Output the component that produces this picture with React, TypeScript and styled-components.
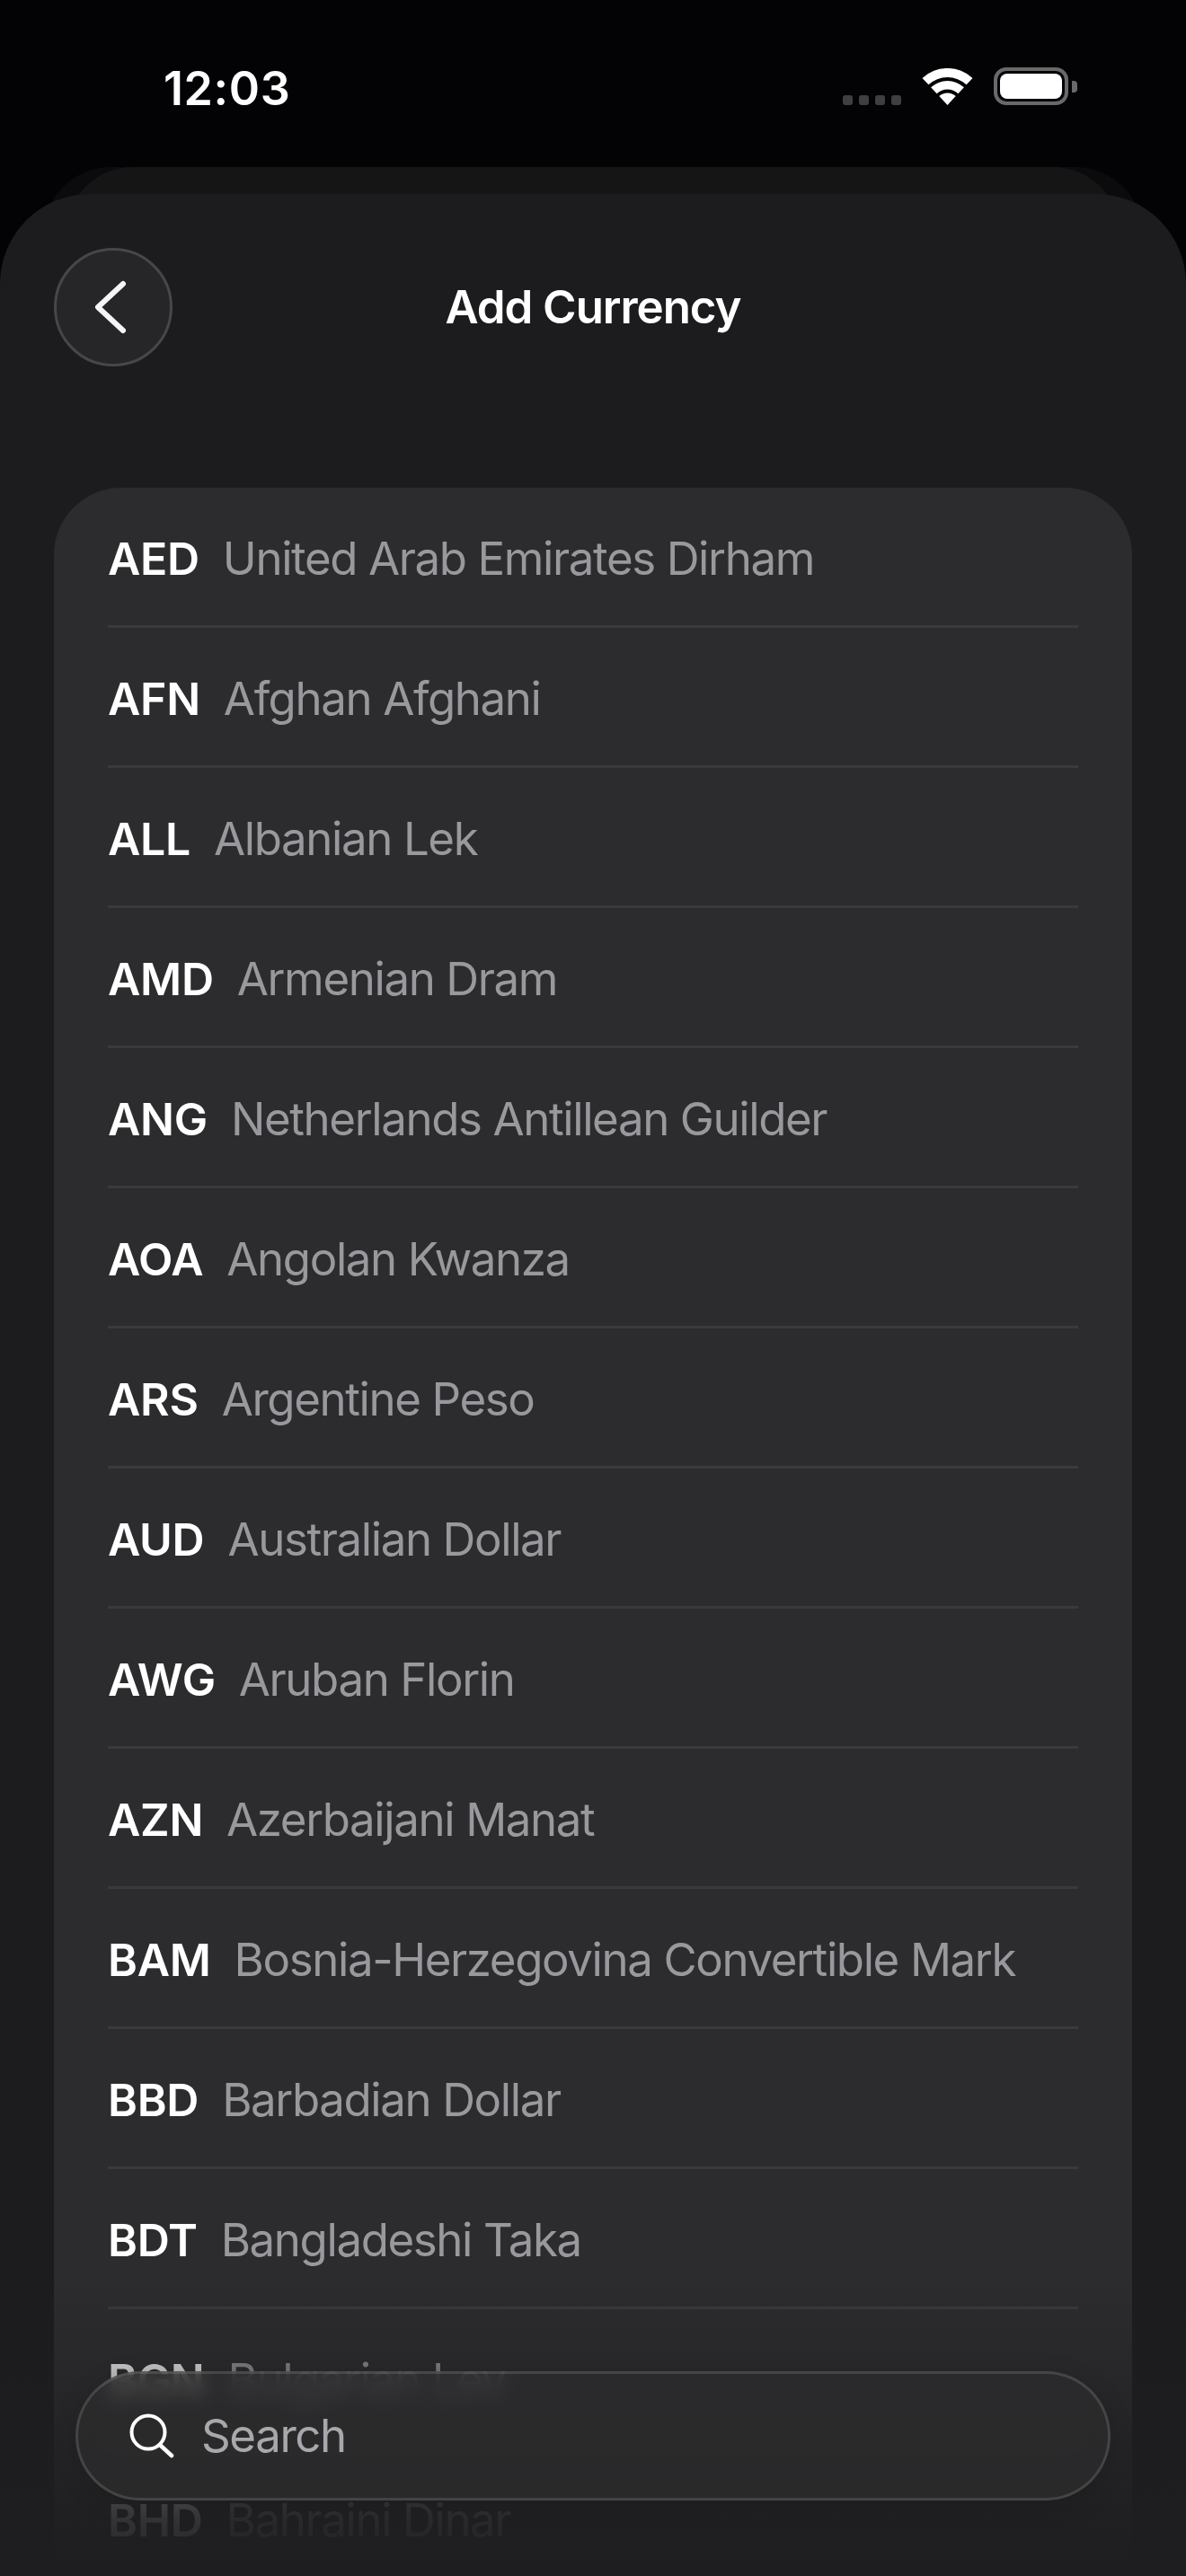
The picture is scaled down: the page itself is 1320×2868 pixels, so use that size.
import React from "react";
import styled, { createGlobalStyle } from "styled-components";

const Global = createGlobalStyle`
  html, body { margin: 0; padding: 0; background: #030305; }
  * { box-sizing: border-box; }
  body { font-family: Inter, "Liberation Sans", sans-serif; -webkit-font-smoothing: antialiased; }
`;

const Screen = styled.div`
  position: relative;
  isolation: isolate;
  width: 1320px;
  height: 2868px;
  overflow: hidden;
  background: #030305;
  color: #fff;
`;

const StatusBar = styled.header`
  height: 216px;
  padding: 71px 131px 0 182px;
  display: flex;
  justify-content: space-between;
  align-items: flex-start;
`;

const Time = styled.span`
  font-size: 52px;
  line-height: 56px;
  font-weight: 600;
  letter-spacing: 0.6px;
`;

const StatusIcons = styled.div`
  display: flex;
  align-items: flex-end;
  height: 42px;
  margin-top: 4px;
`;

const Dots = styled.div`
  display: flex;
  gap: 7px;
  margin-right: 23px;
`;

const Dot = styled.i`
  display: block;
  width: 11px;
  height: 11px;
  border-radius: 3px;
  background: #3f3f41;
`;

const Wifi = styled.svg`
  display: block;
  width: 57px;
  height: 41px;
  margin-right: 23px;
`;

const Battery = styled.div`
  width: 83px;
  height: 42px;
  padding: 3px;
  border: 4px solid #69696b;
  border-radius: 14px;
  position: relative;
  &::after {
    content: "";
    position: absolute;
    left: 83px;
    top: 11px;
    width: 6px;
    height: 13px;
    border-radius: 0 4px 4px 0;
    background: #69696b;
  }
`;

const BatteryFill = styled.div`
  height: 100%;
  border-radius: 8px;
  background: #fff;
`;

const Sheet = styled.main`
  position: relative;
  min-height: 2652px;
  padding: 60px 60px 0;
  background: #1c1c1e;
  border-radius: 100px 100px 0 0;
  &::before,
  &::after {
    content: "";
    position: absolute;
    top: -30px;
    height: 120px;
    border-radius: 75px 75px 0 0;
  }
  &::before {
    left: 48px;
    right: 48px;
    background: #0b0b0e;
    z-index: -2;
  }
  &::after {
    left: 73px;
    right: 73px;
    background: #151516;
    z-index: -1;
  }
`;

const Header = styled.div`
  display: grid;
  grid-template-columns: 132px 1fr 132px;
  align-items: center;
  margin-bottom: 135px;
`;

const BackButton = styled.button`
  width: 132px;
  height: 132px;
  padding: 0 8px 0 0;
  display: flex;
  align-items: center;
  justify-content: center;
  border-radius: 50%;
  border: 3px solid #47474a;
  background: #262628;
`;

const Title = styled.h1`
  margin: 0;
  text-align: center;
  font-size: 51px;
  line-height: 60px;
  font-weight: 600;
  letter-spacing: -1.05px;
`;

const Card = styled.section`
  padding: 0 60px;
  background: #2c2c2e;
  border-radius: 75px 75px 0 0;
`;

const Row = styled.div`
  height: 156px;
  padding-bottom: 3px;
  display: flex;
  align-items: center;
  gap: 26px;
  border-bottom: 3px solid #3a3a3c;
`;

const Code = styled.span`
  font-size: 50px;
  font-weight: 600;
  line-height: 60px;
  margin-top: 7px;
  letter-spacing: -0.3px;
`;

const Name = styled.span`
  font-size: 51px;
  font-weight: 400;
  line-height: 60px;
  margin-top: 7px;
  letter-spacing: -1.4px;
  color: #98989d;
`;

const Fade = styled.div`
  position: absolute;
  left: 0;
  right: 0;
  bottom: 0;
  height: 331px;
  background: linear-gradient(
    to bottom,
    rgba(30, 30, 32, 0) 0%,
    rgba(30, 30, 32, 0.3) 30%,
    rgba(30, 30, 32, 0.9) 81%,
    rgba(30, 30, 32, 1) 100%
  );
  pointer-events: none;
`;

const SearchBar = styled.div`
  position: absolute;
  left: 84px;
  right: 84px;
  bottom: 84px;
  height: 144px;
  padding: 0 0 0 57px;
  display: flex;
  align-items: center;
  gap: 30px;
  border-radius: 72px;
  border: 3px solid rgba(255, 255, 255, 0.13);
  background: rgba(44, 44, 46, 0.72);
  backdrop-filter: blur(10px);
  box-shadow: 0 6px 30px rgba(0, 0, 0, 0.12);
`;

const SearchText = styled.span`
  font-size: 51px;
  line-height: 60px;
  letter-spacing: -1.4px;
  color: #a8a8ac;
`;

const currencies: [string, string][] = [
  ["AED", "United Arab Emirates Dirham"],
  ["AFN", "Afghan Afghani"],
  ["ALL", "Albanian Lek"],
  ["AMD", "Armenian Dram"],
  ["ANG", "Netherlands Antillean Guilder"],
  ["AOA", "Angolan Kwanza"],
  ["ARS", "Argentine Peso"],
  ["AUD", "Australian Dollar"],
  ["AWG", "Aruban Florin"],
  ["AZN", "Azerbaijani Manat"],
  ["BAM", "Bosnia-Herzegovina Convertible Mark"],
  ["BBD", "Barbadian Dollar"],
  ["BDT", "Bangladeshi Taka"],
  ["BGN", "Bulgarian Lev"],
  ["BHD", "Bahraini Dinar"],
];

export default function App() {
  return (
    <Screen>
      <Global />
      <StatusBar>
        <Time>12:03</Time>
        <StatusIcons>
          <Dots>
            <Dot />
            <Dot />
            <Dot />
            <Dot />
          </Dots>
          <Wifi viewBox="0 0 57 41" fill="#fff">
            <path d="M0.5 11A41 41 0 0 1 56.5 11L49.6 18.3A31 31 0 0 0 7.4 18.3Z" />
            <path d="M10.1 21.3A27 27 0 0 1 46.9 21.3L40.4 28.2A17.5 17.5 0 0 0 16.6 28.2Z" />
            <path d="M19.3 31.1A13.5 13.5 0 0 1 37.7 31.1L28.5 41Z" />
          </Wifi>
          <Battery>
            <BatteryFill />
          </Battery>
        </StatusIcons>
      </StatusBar>
      <Sheet>
        <Header>
          <BackButton aria-label="Back">
            <svg width="38" height="60" viewBox="0 0 38 60" fill="none">
              <path d="M34 4L6 30L34 56" stroke="#f5f5f7" strokeWidth="6" strokeLinecap="round" strokeLinejoin="round" />
            </svg>
          </BackButton>
          <Title>Add Currency</Title>
          <span />
        </Header>
        <Card>
          {currencies.map(([code, name]) => (
            <Row key={code}>
              <Code>{code}</Code>
              <Name>{name}</Name>
            </Row>
          ))}
        </Card>
      </Sheet>
      <Fade />
      <SearchBar>
        <svg width="50" height="50" viewBox="0 0 50 50" fill="none">
          <circle cx="21" cy="21" r="18.5" stroke="#fff" strokeWidth="4" />
          <path d="M34 35L47 47" stroke="#fff" strokeWidth="4.5" strokeLinecap="round" />
        </svg>
        <SearchText>Search</SearchText>
      </SearchBar>
    </Screen>
  );
}
